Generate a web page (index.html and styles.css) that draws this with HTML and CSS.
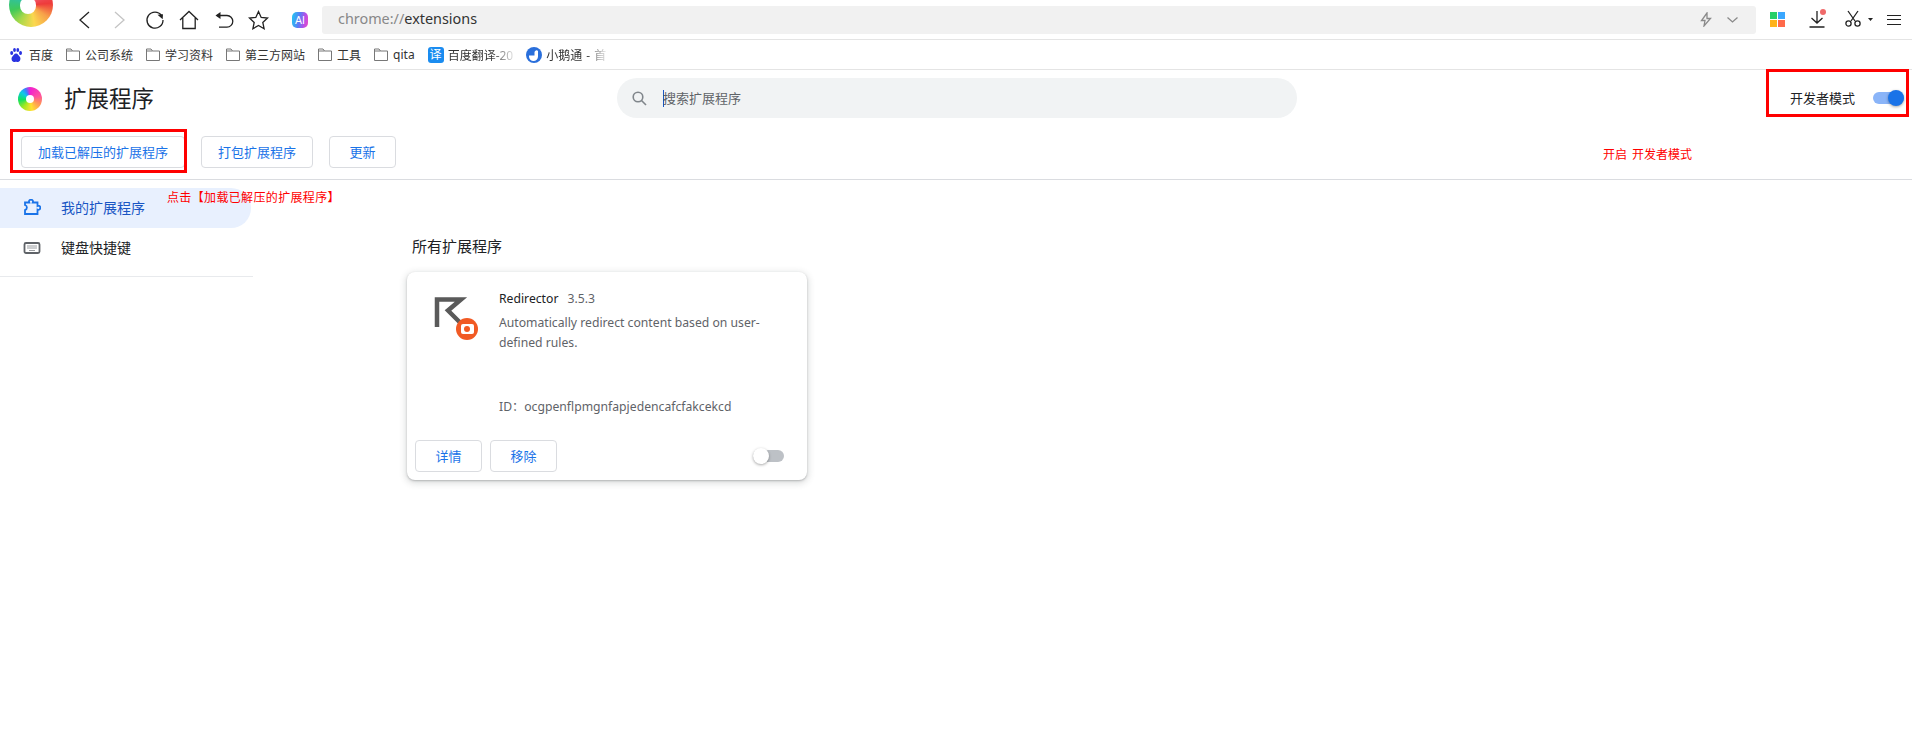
FILE: index.html
```html
<!DOCTYPE html>
<html lang="zh-CN">
<head>
<meta charset="utf-8">
<title>扩展程序</title>
<link rel="stylesheet" href="styles.css">
</head>
<body>
<div class="toolbar">
  <div class="app-logo"><div class="swirl swirl-big"></div></div>
  <div class="nav">
    <span class="slot s36"><svg width="12" height="18" viewBox="0 0 12 18"><path d="M11 1 2 9l9 8" class="ln"/></svg></span>
    <span class="slot s36"><svg width="12" height="18" viewBox="0 0 12 18"><path d="M1 1l9 8-9 8" class="ln dim"/></svg></span>
    <span class="slot s33"><svg width="20" height="20" viewBox="0 0 20 20"><path d="M16.500 5.500A8 8 0 1 0 18 10" class="ln"/><path d="M12.500 4.800l5.500-.6-.3 5z" class="fill"/></svg></span>
    <span class="slot s35"><svg width="20" height="20" viewBox="0 0 20 20"><path d="M1 10 10 1.500 19 10M3.800 8v10.500h12.400V8" class="ln"/></svg></span>
    <span class="slot s35"><svg width="20" height="18" viewBox="0 0 20 18"><path d="M3 4.500h10a5.800 5.800 0 0 1 0 11.600H5" class="ln"/><path d="M6.500 1v7L1.500 4.500z" class="fill"/></svg></span>
    <span class="slot s35"><svg width="21" height="20" viewBox="0 0 21 20"><path d="M10.500 1.500l2.700 5.900 6.300.7-4.700 4.300 1.300 6.300-5.600-3.200-5.600 3.200 1.300-6.300L1.500 8.100l6.300-.7z" class="ln"/></svg></span>
    <span class="slot s46"><span class="ai">AI</span></span>
  </div>
  <div class="url">
    <span class="scheme">chrome://</span><span class="host">extensions</span>
    <span class="url-end">
      <svg width="12" height="15" viewBox="0 0 12 15"><path d="M7 1 1.500 8.500h3.500l-1 5.500L10.500 6.500H7z" class="ln grey"/></svg>
      <svg width="11" height="6" viewBox="0 0 11 6"><path d="M.5.500l5 4.500 5-4.500" class="ln grey"/></svg>
    </span>
  </div>
  <div class="tools">
    <span class="tiles"><i class="t-green"></i><i class="t-blue"></i><i class="t-amber"></i><i class="t-red"></i></span>
    <span class="dl">
      <svg width="16" height="18" viewBox="0 0 16 18"><path d="M8 1v12M2.500 8 8 13l5.500-5M.500 17h15" class="ln"/></svg>
      <i class="dot"></i>
    </span>
    <svg class="cut" width="16" height="17" viewBox="0 0 16 17"><path d="M3 1l7 10M13 1 6 11" class="ln"/><circle cx="3.500" cy="13.500" r="2.600" class="ln"/><circle cx="12.500" cy="13.500" r="2.600" class="ln"/></svg>
    <svg class="caret" width="5" height="3" viewBox="0 0 5 3"><path d="M0 0h5L2.500 3z" class="fill"/></svg>
    <span class="menu"><i></i><i></i><i></i></span>
  </div>
</div>

<div class="bookmarks">
  <span class="bm"><svg class="bm-ic" width="14" height="14" viewBox="0 0 14 14"><g fill="#2932e1"><ellipse cx="2.700" cy="5" rx="1.500" ry="2"/><ellipse cx="5.500" cy="2" rx="1.400" ry="2"/><ellipse cx="8.800" cy="2" rx="1.400" ry="2"/><ellipse cx="11.500" cy="5" rx="1.500" ry="2"/><path d="M7 5.500c2 0 2.300 2 3.600 3 1.700 1.400.7 5.500-1.600 5.500-.9 0-1.200-.3-2-.3s-1.100.3-2 .3c-2.300 0-3.300-4.100-1.600-5.500 1.300-1 1.600-3 3.600-3z"/></g></svg>百度</span>
  <span class="bm"><svg class="bm-ic" width="14" height="13" viewBox="0 0 14 13"><path d="M.500 12.500V1h4.500l1.500 2h7v9.500zM.500 3h6" class="ln folder"/></svg>公司系统</span>
  <span class="bm"><svg class="bm-ic" width="14" height="13" viewBox="0 0 14 13"><path d="M.500 12.500V1h4.500l1.500 2h7v9.500zM.500 3h6" class="ln folder"/></svg>学习资料</span>
  <span class="bm"><svg class="bm-ic" width="14" height="13" viewBox="0 0 14 13"><path d="M.500 12.500V1h4.500l1.500 2h7v9.500zM.500 3h6" class="ln folder"/></svg>第三方网站</span>
  <span class="bm"><svg class="bm-ic" width="14" height="13" viewBox="0 0 14 13"><path d="M.500 12.500V1h4.500l1.500 2h7v9.500zM.500 3h6" class="ln folder"/></svg>工具</span>
  <span class="bm"><svg class="bm-ic" width="14" height="13" viewBox="0 0 14 13"><path d="M.500 12.500V1h4.500l1.500 2h7v9.500zM.500 3h6" class="ln folder"/></svg>qita</span>
  <span class="bm"><span class="yi">译</span><span class="fade">百度翻译-20</span></span>
  <span class="bm"><svg class="bm-ic16" width="16" height="16" viewBox="0 0 16 16"><circle cx="8" cy="8" r="8" fill="#2a6fdb"/><path d="M3 8.500h5.500V5.200a2 2 0 0 1 3.500-1.200v5.500a4.500 4.500 0 0 1-9 0z" fill="#fff"/></svg><span class="fade goose">小鹅通 - 首</span></span>
</div>

<header class="ext-head">
  <div class="brand"><div class="swirl swirl-small"></div><h1>扩展程序</h1></div>
  <div class="search">
    <svg width="15" height="15" viewBox="0 0 15 15"><circle cx="6" cy="6" r="4.800" class="ln grey2"/><path d="M9.500 9.500l4.500 4.500" class="ln grey2"/></svg>
    <span class="caret-line"></span><span class="ph">搜索扩展程序</span>
  </div>
  <div class="dev">
    <span class="lift">开发者模式</span>
    <span class="sw on"><i></i></span>
  </div>
</header>

<div class="actions">
  <button class="btn b-load">加载已解压的扩展程序</button>
  <button class="btn b-pack">打包扩展程序</button>
  <button class="btn b-upd">更新</button>
</div>

<div class="content">
  <nav class="side">
    <div class="side-item active">
      <svg width="18" height="18" viewBox="0 0 18 18"><path d="M2 3.500H6.200a2 2 0 1 1 3.600 0H14.500V7a2 2 0 1 1 0 3.600V15H2V11a2.600 2.600 0 0 0 0-5z" class="ln blue"/></svg>
      <span class="lift">我的扩展程序</span>
    </div>
    <div class="side-item">
      <svg width="18" height="14" viewBox="0 0 18 14"><rect x="1.500" y="2" width="15" height="10" rx="1.500" class="ln kb"/><path d="M4 5h10M4 7h10M6 9.500h6" class="ln kb2"/></svg>
      <span class="lift">键盘快捷键</span>
    </div>
    <div class="side-rule"></div>
  </nav>
  <main class="main">
    <h2>所有扩展程序</h2>
    <article class="card">
      <div class="card-top">
        <div class="ext-icon">
          <svg width="36" height="33" viewBox="0 0 36 33"><path d="M3 30V2.500H27L14 13.500 29 28.500" class="redir"/></svg>
          <span class="badge"><i></i></span>
        </div>
        <div class="card-text">
          <div class="name">Redirector<span class="ver">3.5.3</span></div>
          <p class="desc">Automatically redirect content based on user-defined rules.</p>
          <p class="ext-id">ID：ocgpenflpmgnfapjedencafcfakcekcd</p>
        </div>
      </div>
      <div class="card-foot">
        <button class="btn b-small">详情</button>
        <button class="btn b-small">移除</button>
        <span class="sw off"><i></i></span>
      </div>
    </article>
  </main>
</div>

<div class="mark mark-load"></div>
<div class="mark mark-dev"></div>
<span class="note note-load">点击【加载已解压的扩展程序】</span>
<span class="note note-dev">开启 开发者模式</span>
</body>
</html>
```
FILE: styles.css
```css
* { box-sizing: border-box; }
html, body { margin: 0; padding: 0; background: #fff; }
body {
  position: relative;
  width: 1912px;
  height: 748px;
  overflow: hidden;
  font-family: "Noto Sans", "Noto Sans CJK SC", sans-serif;
  color: #202124;
  text-spacing-trim: space-all;
}
i { display: block; }

.ln { fill: none; stroke: #222; stroke-width: 1.300; }
.ln.dim { stroke: #c4c4c4; }
.ln.grey { stroke: #8a8a8a; }
.ln.grey2 { stroke: #80868b; stroke-width: 1.600; }
.ln.folder { stroke: #777; stroke-width: 1; }
.ln.blue { stroke: #1a73e8; stroke-width: 1.800; }
.ln.kb { stroke: #5f6368; stroke-width: 1.800; }
.ln.kb2 { stroke: #9a9da1; stroke-width: 1; }
.fill { fill: #222; }
.lift { padding-bottom: 2px; }

/* browser toolbar */
.toolbar {
  display: flex;
  height: 40px;
  border-bottom: 1px solid #e4e4e4;
  align-items: center;
  position: relative;
}
.app-logo {
  width: 66px;
  height: 39px;
  overflow: hidden;
  flex: none;
  position: relative;
}
.swirl {
  position: absolute;
  border-radius: 50%;
}
.swirl::after {
  content: "";
  position: absolute;
  border-radius: 50%;
  background: #fff;
}
.swirl-big {
  width: 44px;
  height: 44px;
  left: 9px;
  top: -17px;
  background: conic-gradient(#f9b4e0 0deg, #f05060 50deg, #ee3b3b 85deg, #f7a04a 125deg, #fbd84e 170deg, #a8d94a 215deg, #3fc95a 255deg, #2fc0a8 300deg, #2a9cf0 330deg, #f9b4e0 360deg);
  filter: blur(.5px);
}
.swirl-big::after { left: 24%; top: 32%; width: 38%; height: 38%; }
.swirl-small {
  width: 24px;
  height: 24px;
  background: conic-gradient(#f020d0 0deg, #ff50a0 70deg, #ff8a60 110deg, #ffe030 170deg, #a0e820 220deg, #10e060 265deg, #10c8e8 310deg, #3a80ff 335deg, #f020d0 360deg);
  filter: blur(.4px);
}
.swirl-small::after { left: 33%; top: 33%; width: 34%; height: 34%; }

.nav { display: flex; align-items: center; flex: none; }
.slot { display: flex; align-items: center; justify-content: center; height: 39px; }
.s36 { width: 36px; }
.s33 { width: 33px; }
.s35 { width: 35px; }
.s46 { width: 46px; justify-content: flex-start; padding-left: 16px; }
.ai {
  width: 16px;
  height: 16px;
  border-radius: 5px;
  background: linear-gradient(100deg, #1ecbf2, #5a7cf5 45%, #b84ee8 75%, #ee4cc0);
  color: #fff;
  font: 400 10.500px/16px "Liberation Sans", sans-serif;
  text-align: center;
}
.url {
  width: 1434px;
  height: 28px;
  flex: none;
  background: #f1f1f1;
  border-radius: 3px;
  display: flex;
  align-items: center;
  padding: 0 0 2px 16px;
  font-size: 14.400px;
}
.scheme { color: #888; }
.host { color: #333; }
.url-end { margin-left: auto; display: flex; align-items: center; gap: 15px; padding: 2px 18px 0 0; }
.tools { display: flex; align-items: center; margin-left: 14px; flex: none; }
.tiles {
  display: grid;
  grid-template-columns: 7px 7px;
  grid-template-rows: 7px 7px;
  gap: 1px;
  margin-right: 24px;
}
.t-green { background: #26cf6a; }
.t-blue { background: #3aa7ff; }
.t-amber { background: #ffb31a; }
.t-red { background: #ff6a4a; }
.dl { position: relative; display: block; width: 16px; height: 18px; margin: 0 20px 2px 0; }
.dl svg { display: block; }
.dot { position: absolute; right: -1px; top: -1px; width: 6px; height: 6px; border-radius: 50%; background: #f06a6a; }
.cut { margin: 0 7px 2px 0; }
.caret { margin-right: 14px; }
.menu { display: flex; flex-direction: column; gap: 3.500px; width: 14px; }
.menu i { height: 1px; background: #222; }

/* bookmarks */
.bookmarks {
  height: 30px;
  border-bottom: 1px solid #e4e4e4;
  display: flex;
  align-items: center;
  padding-left: 9px;
  gap: 13px;
  font-size: 12px;
  color: #333;
}
.bm { display: flex; align-items: center; white-space: nowrap; }
.bm-ic { margin-right: 5px; flex: none; }
.bm-ic16 { margin-right: 4px; flex: none; }
.bm:first-child .bm-ic { margin-right: 6px; }
.yi {
  width: 16px;
  height: 16px;
  margin-right: 4px;
  background: #1a8cf0;
  border-radius: 3px;
  color: #fff;
  font-size: 12px;
  line-height: 16px;
  text-align: center;
}
.fade {
  display: block;
  -webkit-mask-image: linear-gradient(90deg, #000 65%, rgba(0,0,0,.15));
  mask-image: linear-gradient(90deg, #000 65%, rgba(0,0,0,.15));
}
.goose { word-spacing: 1px; }

/* extensions header */
.ext-head { display: flex; align-items: flex-start; height: 58px; }
.brand { position: relative; width: 617px; height: 58px; padding-left: 64px; flex: none; }
.brand .swirl-small { left: 18px; top: 17px; }
h1 { margin: 0; font-size: 22.500px; font-weight: 400; line-height: 58px; }
.search {
  width: 680px;
  height: 40px;
  margin-top: 8px;
  border-radius: 20px;
  background: #f1f3f4;
  display: flex;
  align-items: center;
  padding-left: 15px;
  flex: none;
}
.caret-line { width: 1px; height: 17px; background: #1a56c4; margin-left: 16px; }
.ph { font-size: 13px; color: #5f6368; margin-left: -1px; padding-bottom: 2px; }
.dev {
  margin-left: auto;
  margin-top: 8px;
  height: 40px;
  padding-right: 8px;
  display: flex;
  align-items: center;
  gap: 18px;
  font-size: 13px;
}
.sw { position: relative; display: block; width: 31px; height: 12px; border-radius: 6px; }
.sw i { position: absolute; top: -2px; width: 16px; height: 16px; border-radius: 50%; box-shadow: 0 1px 3px rgba(0,0,0,.35); }
.sw.on { background: #8ab4f8; }
.sw.on i { right: 0; background: #1a73e8; }
.sw.off { background: #bdc1c6; }
.sw.off i { left: 0; background: #fff; }

/* action row */
.actions {
  height: 52px;
  padding: 8px 0 0 21px;
  border-bottom: 1px solid #dadce0;
  display: flex;
  align-items: flex-start;
  gap: 16px;
}
.btn {
  height: 32px;
  padding: 0 0 2px;
  border: 1px solid #dadce0;
  border-radius: 4px;
  background: #fff;
  color: #1a73e8;
  font: 13px "Noto Sans", "Noto Sans CJK SC", sans-serif;
}
.b-load { width: 164px; }
.b-pack { width: 112px; }
.b-upd { width: 67px; }
.b-small { width: 67px; }

/* body */
.content { display: flex; }
.side { width: 253px; flex: none; padding-top: 8px; }
.side-item {
  width: 251px;
  height: 40px;
  display: flex;
  align-items: center;
  padding-left: 23px;
  gap: 20px;
  font-size: 14px;
  border-radius: 0 20px 20px 0;
}
.side-item svg { flex: none; }
.side-item.active { background: #e8f0fe; color: #1a56c4; }
.side-rule { height: 1px; margin-top: 8px; background: #e8eaed; }
.main { padding: 0 0 0 154px; }
h2 { margin: 0 0 0 5px; padding-top: 55px; font-size: 15px; line-height: 22px; font-weight: 400; height: 92px; }
.card {
  width: 400px;
  height: 208px;
  border-radius: 8px;
  background: #fff;
  box-shadow: 0 1px 2px rgba(60,64,67,.3), 0 2px 6px 2px rgba(60,64,67,.15);
  display: flex;
  flex-direction: column;
}
.card-top { display: flex; flex: 1; padding: 17px 16px 0 27px; }
.ext-icon { position: relative; width: 65px; flex: none; padding-top: 8px; }
.ext-icon svg { display: block; }
.redir { fill: none; stroke: #5a5a5a; stroke-width: 4.500; stroke-miterlimit: 10; }
.badge {
  position: absolute;
  left: 22px;
  top: 29px;
  width: 22px;
  height: 22px;
  border-radius: 50%;
  background: #f15a24;
  display: flex;
  align-items: center;
  justify-content: center;
}
.badge i { width: 13px; height: 10px; background: #fff; border-radius: 2px; position: relative; }
.badge i::after { content: ""; position: absolute; left: 3px; top: 2px; width: 6px; height: 6px; border-radius: 50%; background: #f15a24; }
.card-text { flex: 1; }
.name { font-size: 12.200px; line-height: 20px; }
.ver { margin-left: 9px; color: #5f6368; }
.desc { margin: 4px 0 0; font-size: 12.200px; line-height: 20px; color: #5f6368; }
.ext-id { margin: 44px 0 0; font-size: 12.200px; line-height: 20px; color: #5f6368; }
.card-foot { display: flex; align-items: center; gap: 8px; padding: 0 23px 8px 8px; }
.card-foot .sw { margin-left: auto; }

/* annotations over the screenshot */
.mark { position: absolute; border: 3px solid #f00; }
.mark-load { left: 10px; top: 129px; width: 177px; height: 44px; }
.mark-dev { left: 1766px; top: 69px; width: 143px; height: 48px; }
.note { position: absolute; font-size: 12px; line-height: 16px; color: #f00; white-space: nowrap; }
.note-load { left: 167px; top: 190px; letter-spacing: .35px; }
.note-dev { left: 1603px; top: 147px; word-spacing: 2px; }
```
